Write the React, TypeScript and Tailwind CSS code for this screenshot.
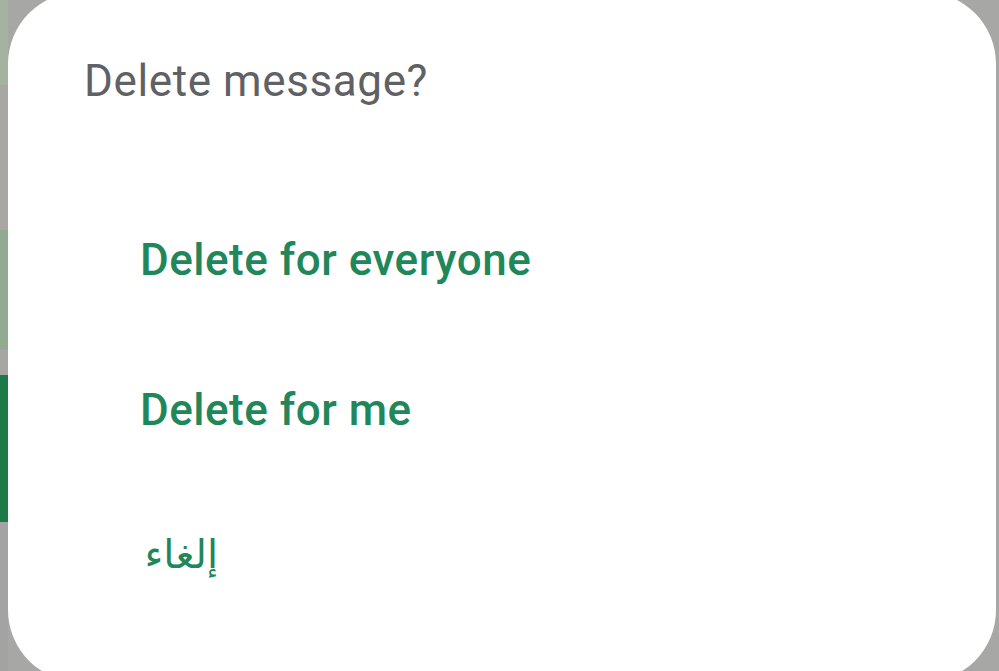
import React from 'react';

function Backdrop() {
  // blurred chat screen peeking out on the left edge
  return (
    <div className="flex h-full w-[8px] shrink-0 flex-col">
      <div className="h-[85px] bg-[#a3b39f]" />
      <div className="h-[145px] bg-[#a9a7a4]" />
      <div className="h-[120px] bg-[#93aa92]" />
      <div className="h-[25px] bg-[#a8a6a3]" />
      <div className="h-[147px] bg-[#1b7a47]" />
      <div className="flex-1 bg-[#a3a3a3]" />
    </div>
  );
}

function Action({ label, className }: { label: string; className?: string }) {
  return (
    <button
      className={`block text-left text-[44px] font-medium leading-none tracking-[0.5px] text-[#1f875a] ${className ?? ''}`}
    >
      {label}
    </button>
  );
}

export default function App() {
  return (
    <div
      className="flex h-[671px] w-[999px] overflow-hidden bg-[#a7a7a5]"
      style={{ fontFamily: 'Roboto, "Noto Sans", sans-serif' }}
    >
      <Backdrop />
      <div className="-mt-[8px] mr-[3px] h-[690px] flex-1 rounded-[72px] bg-white">
        <div className="pl-[76px] pt-[67px]">
          <h2 className="text-[44px] font-normal leading-none tracking-[0.6px] text-[#5f6165]">Delete message?</h2>
        </div>
        <div className="flex flex-col pl-[132px] pt-[135px]">
          <Action label="Delete for everyone" />
          <Action label="Delete for me" className="mt-[106px]" />
          <button
            dir="rtl"
            className="ml-[8px] mt-[102px] block w-[70px] text-[40px] leading-none text-[#1f875a]"
            style={{ fontFamily: '"DejaVu Sans", sans-serif' }}
          >
            إلغاء
          </button>
        </div>
      </div>
    </div>
  );
}
